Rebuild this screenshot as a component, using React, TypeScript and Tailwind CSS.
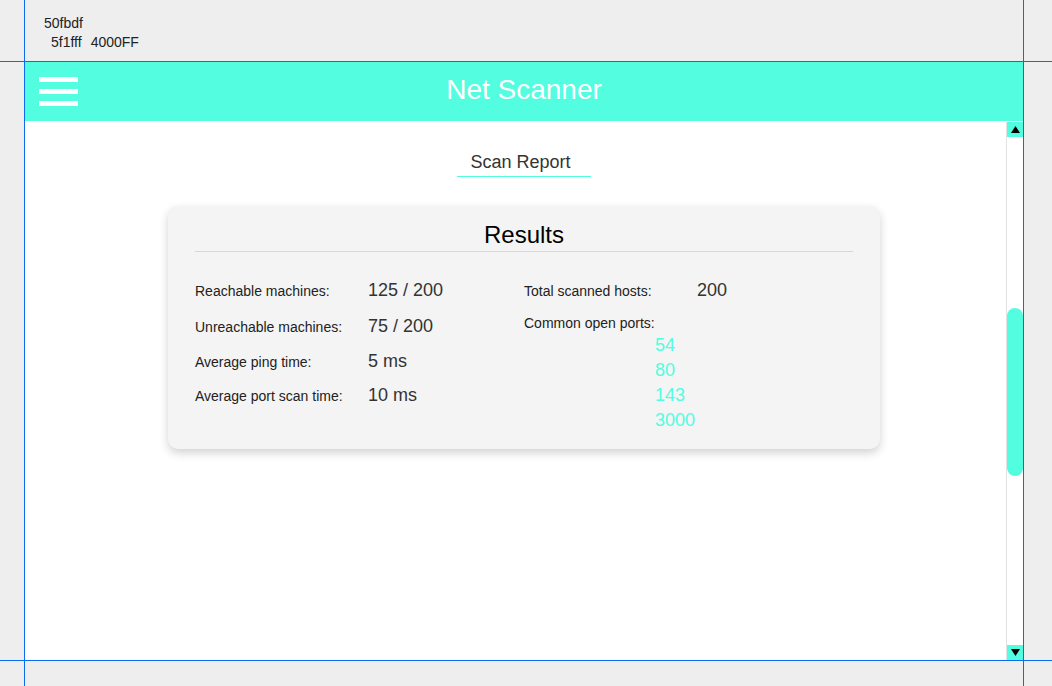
import React from 'react';

const TEAL = '#52fde0';

const leftRows = [
    { label: 'Reachable machines:', value: '125 / 200', h: 'h-[36px]' },
    { label: 'Unreachable machines:', value: '75 / 200', h: 'h-[36px]' },
    { label: 'Average ping time:', value: '5 ms', h: 'h-[34px]' },
    { label: 'Average port scan time:', value: '10 ms', h: 'h-[34px]' },
];

const ports = ['54', '80', '143', '3000'];

function Hamburger() {
    return (
        <div className="flex flex-col gap-[7px]">
            <span className="block w-[39px] h-[5px] bg-white" />
            <span className="block w-[39px] h-[5px] bg-white" />
            <span className="block w-[39px] h-[5px] bg-white" />
        </div>
    );
}

function Scrollbar() {
    return (
        <div className="absolute right-0 top-0 bottom-0 w-[17px] bg-white border-l border-[#e2e2e2] flex flex-col">
            <div className="h-[15px] bg-[#52fde0] flex items-center justify-center">
                <svg width="9" height="7" viewBox="0 0 9 7"><polygon points="4.5,0 9,7 0,7" fill="#000" /></svg>
            </div>
            <div className="flex-1 relative">
                <div className="absolute left-0 right-0 top-[171px] h-[168px] rounded-full bg-[#52fde0]" />
            </div>
            <div className="h-[15px] bg-[#52fde0] flex items-center justify-center">
                <svg width="9" height="7" viewBox="0 0 9 7"><polygon points="0,0 9,0 4.5,7" fill="#000" /></svg>
            </div>
        </div>
    );
}

export default function App() {
    return (
        <div className="relative w-[1052px] h-[686px] bg-[#eeeeee] overflow-hidden font-['Liberation_Sans',Arial,sans-serif]">
            {/* Notas de colores */}
            <div className="h-[62px] pt-[14px] pl-[44px] text-[14px] leading-[19px] text-[#222]">
                <div>50fbdf</div>
                <div className="pl-[7px] flex gap-[9px]">
                    <span>5f1fff</span>
                    <span>4000FF</span>
                </div>
            </div>

            {/* Ventana */}
            <div className="ml-[25px] w-[998px] h-[598px] flex flex-col bg-white">
                {/* Header */}
                <div className="relative h-[59px] shrink-0 bg-[#52fde0] flex items-center justify-center pb-[4px]">
                    <div className="absolute left-[14px] top-[15px]">
                        <Hamburger />
                    </div>
                    <h1 className="text-[28px] text-white leading-none">Net Scanner</h1>
                </div>

                {/* Contenido */}
                <div className="relative flex-1 mt-px">
                    <div className="flex flex-col items-center">
                        <div className="mt-[28px] pl-[13px] pr-[20px] pb-[2px] border-b border-[#52fde0] text-[18px] leading-[24px] text-[#333]">
                            Scan Report
                        </div>

                        <div className="mt-[29px] w-[712px] bg-[#f4f4f4] rounded-[10px] shadow-[0_4px_10px_rgba(0,0,0,0.18)] px-[27px] pt-[15px] pb-[16px]">
                            <h2 className="text-center text-[24px] leading-[28px] text-black pb-[2px] border-b border-[#b9e6e0]">
                                Results
                            </h2>

                            <div className="mt-[21px] grid grid-cols-2">
                                <div className="flex flex-col">
                                    {leftRows.map((r) => (
                                        <div key={r.label} className={`${r.h} flex items-center`}>
                                            <span className="w-[173px] text-[14px] text-[#222]">{r.label}</span>
                                            <span className="text-[18px] text-[#333] -mt-[2px]">{r.value}</span>
                                        </div>
                                    ))}
                                </div>
                                <div className="flex flex-col">
                                    <div className="h-[36px] flex items-center">
                                        <span className="w-[173px] text-[14px] text-[#222]">Total scanned hosts:</span>
                                        <span className="text-[18px] text-[#333] -mt-[2px]">200</span>
                                    </div>
                                    <div className="mt-[4px] h-[20px] flex items-center text-[14px] text-[#222]">
                                        Common open ports:
                                    </div>
                                    <div className="pl-[131px] flex flex-col">
                                        {ports.map((p) => (
                                            <span key={p} className="text-[18px] leading-[25px]" style={{ color: TEAL }}>{p}</span>
                                        ))}
                                    </div>
                                </div>
                            </div>
                        </div>
                    </div>

                    <Scrollbar />
                </div>
            </div>

            {/* Guías */}
            <div className="absolute left-[24px] top-0 bottom-0 w-px bg-[#0a6cf0]" />
            <div className="absolute left-[1023px] top-0 bottom-0 w-px bg-[#0a6cf0]" />
            <div className="absolute top-[61px] left-0 right-0 h-px bg-[#0a6cf0]" />
            <div className="absolute top-[660px] left-0 right-0 h-px bg-[#0a6cf0]" />
        </div>
    );
}
